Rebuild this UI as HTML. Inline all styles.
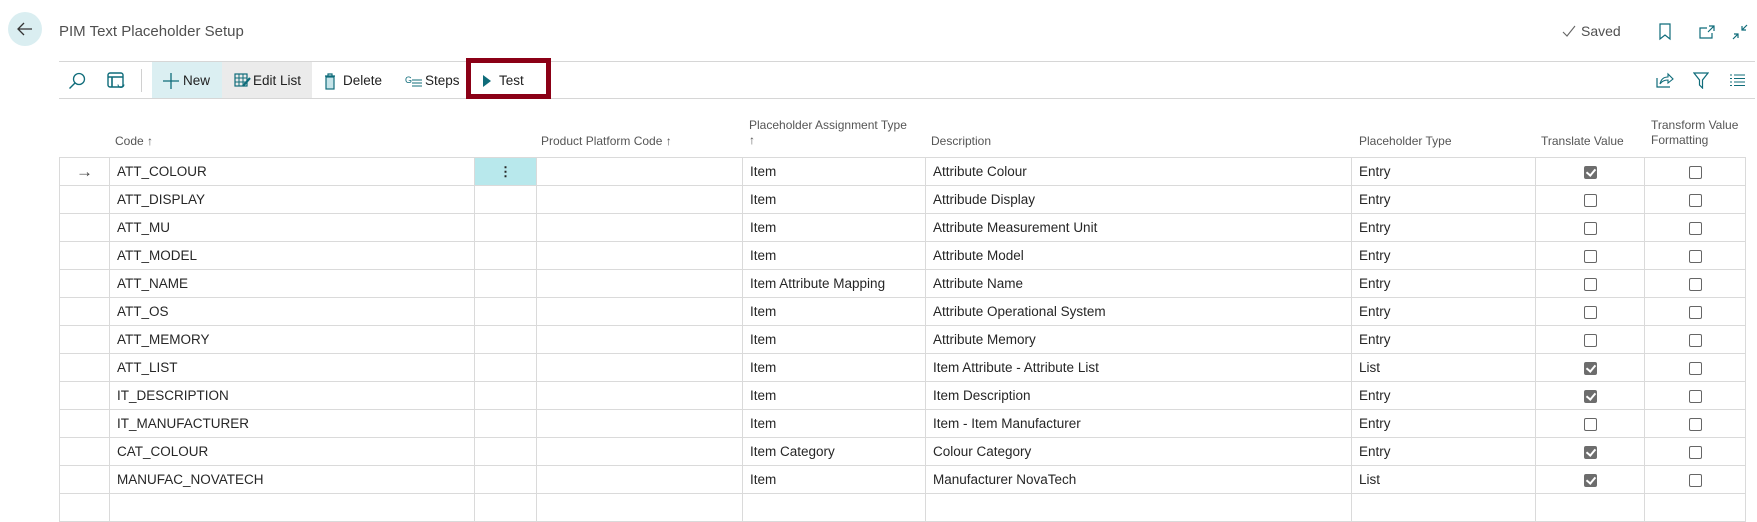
<!DOCTYPE html>
<html><head><meta charset="utf-8"><style>
*{margin:0;padding:0;box-sizing:border-box}
body{width:1757px;height:522px;background:#fff;font-family:"Liberation Sans",sans-serif;color:#212121;position:relative;overflow:hidden}
.a{position:absolute;white-space:nowrap}
.h{position:absolute;font-size:12px;color:#555;line-height:15px}
.tb{font-size:13.5px;color:#212121}
table{position:absolute;left:59px;top:157px;border-collapse:collapse;font-size:13.5px;color:#262626}
td{border:1px solid #dadada;height:28px;padding:0 0 0 7px;white-space:nowrap;vertical-align:middle}
td.c{text-align:center;padding:0}
.cb{display:inline-block;width:13px;height:13px;border:1px solid #666;border-radius:2px;vertical-align:middle}
.cb.on{background:#6d6d6d;border-color:#6d6d6d;position:relative}
.cb.on:after{content:"";position:absolute;left:3px;top:0px;width:4px;height:7px;border:solid #fff;border-width:0 2px 2px 0;transform:rotate(40deg)}
</style></head><body>
<div class="a" style="left:8px;top:12px;width:34px;height:34px;border-radius:50%;background:#daeef1"></div>
<svg class="a" style="left:15px;top:19px" width="20" height="20" viewBox="0 0 20 20"><path d="M17 10H3M9 4L3 10L9 16" fill="none" stroke="#333" stroke-width="1.3"/></svg>
<div class="a" style="left:59px;top:23px;font-size:15px;color:#505050">PIM Text Placeholder Setup</div>
<svg class="a" style="left:1561px;top:24px" width="16" height="14"><path d="M2 8L6 12L14 2" fill="none" stroke="#666" stroke-width="1.1"/></svg>
<div class="a" style="left:1581px;top:23px;font-size:14px;color:#505050">Saved</div>
<svg class="a" style="left:1658px;top:23px" width="14" height="18"><path d="M2 1H12V16L7 12L2 16Z" fill="none" stroke="#0f6c7a" stroke-width="1.2"/></svg>
<svg class="a" style="left:1698px;top:24px" width="18" height="16"><path d="M9 4H2V14H14V9M11 2H16V7M16 2L10 8" fill="none" stroke="#0f6c7a" stroke-width="1.2"/></svg>
<svg class="a" style="left:1731px;top:23px" width="18" height="18"><path d="M2 16L7 11M3 11H7V15M16 2L11 7M11 3V7H15" fill="none" stroke="#0f6c7a" stroke-width="1.2"/></svg>

<div class="a" style="left:59px;top:61px;width:1696px;height:1px;background:#d6d6d6"></div>
<div class="a" style="left:59px;top:98px;width:1696px;height:1px;background:#d6d6d6"></div>
<svg class="a" style="left:68px;top:72px" width="18" height="18"><circle cx="11" cy="7" r="5.5" fill="none" stroke="#0f6c7a" stroke-width="1.3"/><path d="M7 11L1.5 16.5" stroke="#0f6c7a" stroke-width="1.4"/></svg>
<svg class="a" style="left:107px;top:72px" width="19" height="17"><rect x="1" y="1" width="15" height="14" rx="2" fill="none" stroke="#0f6c7a" stroke-width="1.4"/><path d="M1 5H16M5 5V15" stroke="#0f6c7a" stroke-width="1.6"/><path d="M11 12.5a3 3 0 0 0 6 0" fill="none" stroke="#0f6c7a" stroke-width="1"/></svg>
<div class="a" style="left:141px;top:69px;width:1px;height:23px;background:#d0d0d0"></div>
<div class="a" style="left:152px;top:62px;width:70px;height:36px;background:#dbeff2"></div>
<div class="a" style="left:222px;top:62px;width:90px;height:36px;background:#ebebeb"></div>
<svg class="a" style="left:163px;top:73px" width="16" height="16"><path d="M8 0V16M0 8H16" stroke="#0f6c7a" stroke-width="1.3"/></svg>
<div class="a tb" style="left:183px;top:73px">New</div>
<svg class="a" style="left:234px;top:73px" width="17" height="15"><rect x="1" y="1" width="12" height="12" fill="none" stroke="#0f6c7a" stroke-width="1.2"/><path d="M1 5H13M1 9H13M5 1V13M9 1V13" stroke="#0f6c7a" stroke-width="1"/><path d="M9 13L16 5" stroke="#0f6c7a" stroke-width="2.2"/></svg>
<div class="a tb" style="left:253px;top:73px">Edit List</div>
<svg class="a" style="left:324px;top:72px" width="12" height="18"><path d="M1 4H11M4 4V2H8V4" fill="none" stroke="#0f6c7a" stroke-width="1.2"/><rect x="2" y="5" width="8" height="12" fill="#c5e3e8" stroke="#0f6c7a" stroke-width="1.2"/></svg>
<div class="a tb" style="left:343px;top:73px">Delete</div>
<svg class="a" style="left:405px;top:75px" width="18" height="13"><text x="0" y="8" font-size="9" fill="#0f6c7a" font-family="Liberation Sans">G</text><path d="M7 5H17M7 8H17M7 11H17" stroke="#0f6c7a" stroke-width="1"/></svg>
<div class="a tb" style="left:425px;top:73px">Steps</div>
<div class="a" style="left:466px;top:58px;width:85px;height:41px;border:5px solid #8b0016"></div>
<svg class="a" style="left:482px;top:75px" width="10" height="12"><path d="M1 0L9 6L1 12Z" fill="#0f6c7a"/></svg>
<div class="a tb" style="left:499px;top:73px">Test</div>
<svg class="a" style="left:1655px;top:71px" width="20" height="18"><path d="M2 7V16H15" fill="none" stroke="#0f6c7a" stroke-width="1.2"/><path d="M5 13C6 8 9 6 13 6V3L18 8L13 12V9C10 9 7 10 5 13Z" fill="none" stroke="#0f6c7a" stroke-width="1.1"/></svg>
<svg class="a" style="left:1693px;top:72px" width="16" height="17"><path d="M1 1H15L9.5 8V16L6.5 13V8Z" fill="none" stroke="#0f6c7a" stroke-width="1.2"/></svg>
<svg class="a" style="left:1730px;top:74px" width="16" height="13"><path d="M0 1H2M4 1H15M0 4.5H2M4 4.5H15M0 8H2M4 8H15M0 11.5H2M4 11.5H15" stroke="#0f6c7a" stroke-width="1.1"/></svg>

<div class="h" style="left:115px;top:134px">Code ↑</div>
<div class="h" style="left:541px;top:134px">Product Platform Code ↑</div>
<div class="h" style="left:749px;top:118px">Placeholder Assignment Type<br>↑</div>
<div class="h" style="left:931px;top:134px">Description</div>
<div class="h" style="left:1359px;top:134px">Placeholder Type</div>
<div class="h" style="left:1541px;top:134px">Translate Value</div>
<div class="h" style="left:1651px;top:118px">Transform Value<br>Formatting</div>

<table>
<colgroup><col style="width:50px"><col style="width:365px"><col style="width:62px"><col style="width:206px"><col style="width:183px"><col style="width:426px"><col style="width:184px"><col style="width:109px"><col style="width:101px"></colgroup>
<tr><td class="c" style="color:#444;font-size:17px">→</td><td>ATT_COLOUR</td><td class="c" style="background:#b8e8ec;font-weight:bold">⋮</td><td></td><td>Item</td><td>Attribute Colour</td><td>Entry</td><td class="c"><span class="cb on"></span></td><td class="c"><span class="cb"></span></td></tr>
<tr><td></td><td>ATT_DISPLAY</td><td></td><td></td><td>Item</td><td>Attribude Display</td><td>Entry</td><td class="c"><span class="cb"></span></td><td class="c"><span class="cb"></span></td></tr>
<tr><td></td><td>ATT_MU</td><td></td><td></td><td>Item</td><td>Attribute Measurement Unit</td><td>Entry</td><td class="c"><span class="cb"></span></td><td class="c"><span class="cb"></span></td></tr>
<tr><td></td><td>ATT_MODEL</td><td></td><td></td><td>Item</td><td>Attribute Model</td><td>Entry</td><td class="c"><span class="cb"></span></td><td class="c"><span class="cb"></span></td></tr>
<tr><td></td><td>ATT_NAME</td><td></td><td></td><td>Item Attribute Mapping</td><td>Attribute Name</td><td>Entry</td><td class="c"><span class="cb"></span></td><td class="c"><span class="cb"></span></td></tr>
<tr><td></td><td>ATT_OS</td><td></td><td></td><td>Item</td><td>Attribute Operational System</td><td>Entry</td><td class="c"><span class="cb"></span></td><td class="c"><span class="cb"></span></td></tr>
<tr><td></td><td>ATT_MEMORY</td><td></td><td></td><td>Item</td><td>Attribute Memory</td><td>Entry</td><td class="c"><span class="cb"></span></td><td class="c"><span class="cb"></span></td></tr>
<tr><td></td><td>ATT_LIST</td><td></td><td></td><td>Item</td><td>Item Attribute - Attribute List</td><td>List</td><td class="c"><span class="cb on"></span></td><td class="c"><span class="cb"></span></td></tr>
<tr><td></td><td>IT_DESCRIPTION</td><td></td><td></td><td>Item</td><td>Item Description</td><td>Entry</td><td class="c"><span class="cb on"></span></td><td class="c"><span class="cb"></span></td></tr>
<tr><td></td><td>IT_MANUFACTURER</td><td></td><td></td><td>Item</td><td>Item - Item Manufacturer</td><td>Entry</td><td class="c"><span class="cb"></span></td><td class="c"><span class="cb"></span></td></tr>
<tr><td></td><td>CAT_COLOUR</td><td></td><td></td><td>Item Category</td><td>Colour Category</td><td>Entry</td><td class="c"><span class="cb on"></span></td><td class="c"><span class="cb"></span></td></tr>
<tr><td></td><td>MANUFAC_NOVATECH</td><td></td><td></td><td>Item</td><td>Manufacturer NovaTech</td><td>List</td><td class="c"><span class="cb on"></span></td><td class="c"><span class="cb"></span></td></tr>
<tr><td></td><td></td><td></td><td></td><td></td><td></td><td></td><td></td><td></td></tr>
</table>
</body></html>
